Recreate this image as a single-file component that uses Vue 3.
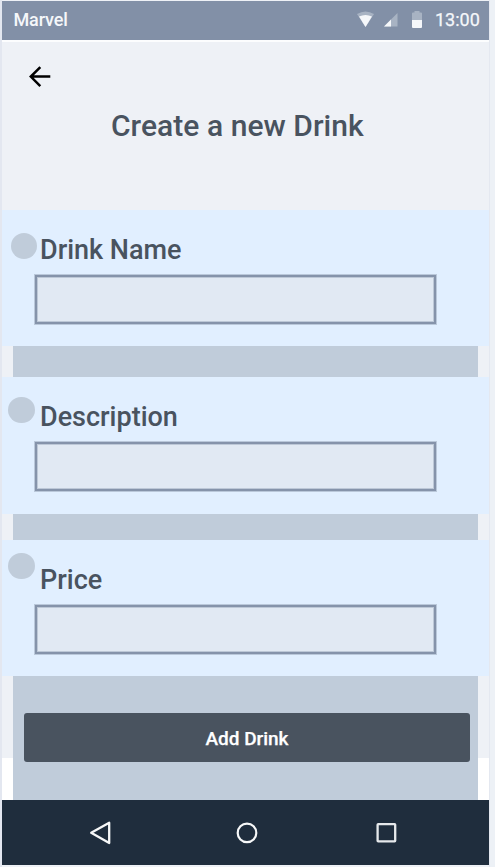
<script setup>
const fields = [
  { id: 'drink-name', label: 'Drink Name' },
  { id: 'description', label: 'Description' },
  { id: 'price', label: 'Price' },
]
</script>

<template>
  <div class="page">
    <main class="screen">
      <header class="status">
        <span class="carrier">Marvel</span>
        <svg class="indicators" width="70" height="20" viewBox="0 0 70 20">
          <path d="M0 4Q8.500 -1 17 4L8.500 17Z" fill="#a8b3c3" />
          <path d="M2 6.600Q8.500 3.200 15 6.600L8.500 17Z" fill="#f5f7fa" />
          <path d="M40.500 3V16.500H27Z" fill="#a8b3c3" />
          <path d="M34 9.500V16.500H27Z" fill="#f5f7fa" />
          <path d="M55 3.500q0-1 1-1h1.500V1h5V2.500H64q1 0 1 1V10H55Z" fill="#a8b3c3" />
          <path d="M55 10H65V17q0 1-1 1H56q-1 0-1-1Z" fill="#f5f7fa" />
        </svg>
        <span class="time">13:00</span>
      </header>
      <section class="heading">
        <svg class="back" width="22" height="22" viewBox="0 0 22 22">
          <path d="M21.300 10.600H1.700M11.300 1.100L1.800 10.600L11.300 20.100" fill="none" stroke="#000" stroke-width="2.500" />
        </svg>
        <h1>Create a new Drink</h1>
      </section>
      <form class="form" @submit.prevent>
        <section v-for="field in fields" :key="field.id" class="card" :class="field.id">
          <i class="dot"></i>
          <div class="field">
            <label :for="field.id">{{ field.label }}</label>
            <input :id="field.id" type="text" />
          </div>
        </section>
        <div class="actions">
          <button type="submit">Add Drink</button>
        </div>
      </form>
      <nav class="nav">
        <svg width="24" height="26" viewBox="0 0 24 26">
          <path d="M21.200 2.700V23L3.200 12.800Z" fill="none" stroke="#f7f8f9" stroke-width="2.300" stroke-linejoin="round" />
        </svg>
        <svg width="24" height="26" viewBox="0 0 24 26">
          <circle cx="12" cy="12.900" r="9.300" fill="none" stroke="#f7f8f9" stroke-width="2.200" />
        </svg>
        <svg width="24" height="26" viewBox="0 0 24 26">
          <rect x="3.600" y="4.200" width="17.600" height="17.200" rx=".6" fill="none" stroke="#e6e9ec" stroke-width="2.300" />
        </svg>
      </nav>
    </main>
  </div>
</template>

<style>
body { margin: 0; background: #eef1f6; }
</style>

<style scoped>
* { box-sizing: border-box; }
.page {
  height: 867px;
  padding: 1px 6px 2px 2px;
  background: linear-gradient(90deg, #e3e7f0 0 2px, transparent 2px 489px, #e4e8f0 489px 490px, #edf1f6 490px);
  font-family: Roboto, sans-serif;
  color: #49535f;
}
.screen { width: 487px; height: 864px; background: #eef1f6; }
.status {
  display: flex;
  align-items: center;
  height: 41px;
  padding: 0 9px 2px 11.500px;
  border-bottom: 2px solid #fcfdfe;
  background: #8290a7;
  background-clip: padding-box;
  color: #f5f7fa;
  font-size: 18px;
  line-height: 37px;
}
.carrier { font-weight: 500; letter-spacing: -.15px; }
.indicators { margin: 0 8px 0 auto; }
.time { width: 45px; white-space: nowrap; -webkit-text-stroke: .25px #f5f7fa; }
.heading { height: 168px; padding-top: 24px; }
.back { display: block; margin-left: 27px; }
h1 {
  margin: 18px 0 0 109px;
  font-size: 30px;
  line-height: 40px;
  font-weight: 500;
  letter-spacing: .04px;
  white-space: nowrap;
}
.form {
  height: 590px;
  background: linear-gradient(90deg, transparent 11px, #c0ccda 11px 476px, transparent 476px),
    linear-gradient(#eef1f6 0 548px, #fff 548px);
}
.card {
  display: flex;
  align-items: flex-start;
  height: 136px;
  background: #e1efff;
}
.card.description { height: 137px; margin-top: 31px; }
.card.price { margin-top: 26px; }
.dot {
  flex: none;
  width: 26.500px;
  height: 26.500px;
  margin: 22.500px 0 0 8.500px;
  border-radius: 50%;
  background: #c0ccda;
}
.description .dot { margin: 19.500px 2.500px 0 6px; }
.price .dot { margin: 12.500px 2.500px 0 6px; }
.field { padding-top: 24px; margin-left: -2px; }
label {
  display: block;
  margin-left: 5px;
  height: 41px;
  line-height: 32px;
  font-size: 27px;
  font-weight: 500;
  white-space: nowrap;
}
input {
  display: block;
  width: 401px;
  height: 49px;
  padding: 0 10px;
  border: 2px solid #8593aa;
  border-radius: 0;
  background: #e1e9f3;
  box-shadow: 0 0 0 1px #bac8da, inset 0 0 0 1px #bdc8d7;
  font: 22px Roboto, sans-serif;
}
.actions { padding: 37px 19px 0 22px; }
button {
  display: block;
  width: 446px;
  height: 49px;
  padding: 2px 0 0;
  border: 0;
  border-radius: 3px;
  background: #49535f;
  color: #fff;
  font: 500 19px/47px Roboto, sans-serif;
  letter-spacing: -.02px;
  -webkit-text-stroke: .25px #fff;
}
.nav {
  display: grid;
  grid-template-columns: 24px 24px 24px;
  column-gap: 123px;
  align-items: center;
  height: 65px;
  padding: 1px 0 0 86px;
  background: #1f2d3d;
}
.nav svg:last-child { margin-left: -8px; }
</style>
